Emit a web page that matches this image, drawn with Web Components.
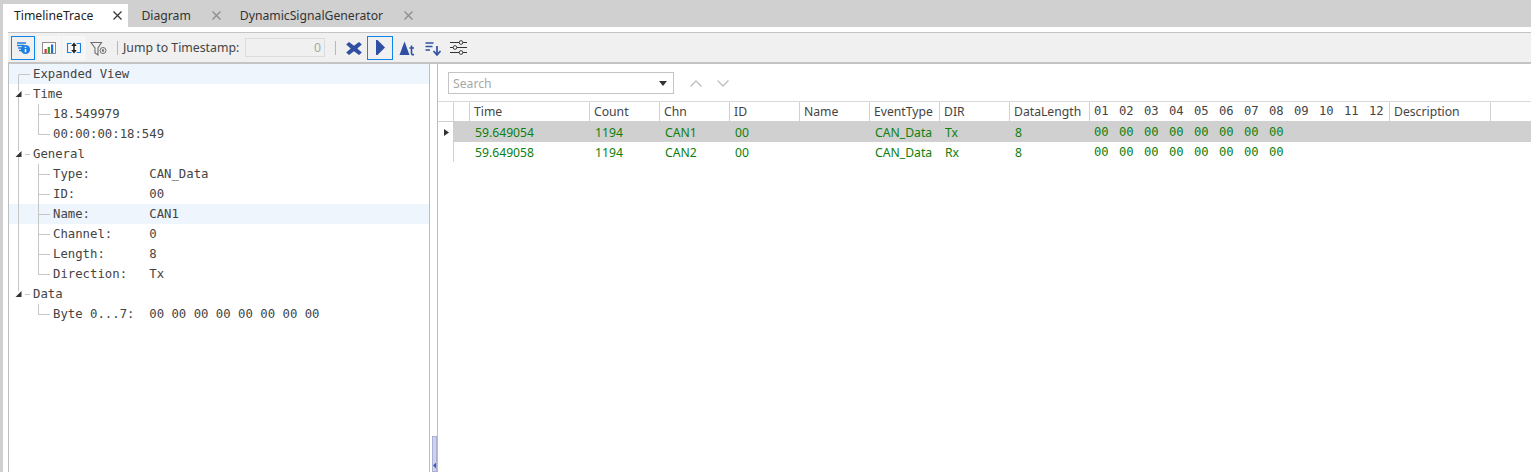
<!DOCTYPE html>
<html>
<head>
<meta charset="utf-8">
<style>
  html, body { margin: 0; height: 100%; overflow: hidden; }
  body { background: #fff; font-family: "Noto Sans", sans-serif; }
</style>
</head>
<body>
<trace-app>
  <tab-strip slot="tabs">
    <tab-item active>TimelineTrace</tab-item>
    <tab-item>Diagram</tab-item>
    <tab-item>DynamicSignalGenerator</tab-item>
  </tab-strip>
  <trace-toolbar slot="toolbar"></trace-toolbar>
  <tree-pane slot="tree"></tree-pane>
  <signal-grid slot="grid"></signal-grid>
</trace-app>

<script>
// Outer frame: gray edge, tab strip, toolbar, then the two panes
class TraceApp extends HTMLElement {
    constructor() {
        super();
        this.attachShadow({ mode: 'open' }).innerHTML = `
            <style>
                :host { display: flex; flex-direction: column; width: 1531px; height: 472px; background: #d0d0d0; box-sizing: border-box; padding-top: 4px; }
                .page { flex: 1; display: flex; flex-direction: column; background: #fff; margin-left: 3px; min-height: 0; padding: 5px 0 0 5px; }
                .body { flex: 1; display: flex; min-height: 0; border-top: 2px solid #c4c4c4; }
                .left { width: 422px; box-sizing: border-box; border-left: 1px solid #bdbdbd; border-right: 1px solid #bdbdbd; flex: none; }
                .split { width: 8px; box-sizing: border-box; flex: none; display: flex; flex-direction: column; justify-content: flex-end; border-right: 1px solid #bdbdbd; }
                .thumb { height: 36px; width: 5px; margin-left: 2px; background: #cfd3ea; border: 1px solid #aab0d6; box-sizing: border-box; display: flex; align-items: flex-end; }
                .thumb svg { display: block; margin-bottom: 2px; }
                .right { flex: 1; min-width: 0; }
            </style>
            <slot name="tabs"></slot>
            <div class="page">
                <slot name="toolbar"></slot>
                <div class="body">
                    <div class="left"><slot name="tree"></slot></div>
                    <div class="split"><div class="thumb"><svg width="4" height="7"><path d="M3.5 0v7L0 3.5z" fill="#3a5fb5"/></svg></div></div>
                    <div class="right"><slot name="grid"></slot></div>
                </div>
            </div>
        `;
    }
}

class TabStrip extends HTMLElement {
    constructor() {
        super();
        this.attachShadow({ mode: 'open' }).innerHTML = `
            <style>
                :host { display: flex; height: 23px; padding-left: 3px; }
            </style>
            <slot></slot>
        `;
    }
}

class TabItem extends HTMLElement {
    constructor() {
        super();
        const on = this.hasAttribute('active');
        this.attachShadow({ mode: 'open' }).innerHTML = `
            <style>
                :host { display: flex; align-items: center; font-size: 12.2px; color: ${on ? '#222' : '#333'}; padding: 0 ${on ? 6 : 6}px 0 ${on ? 11 : 13}px; ${on ? 'background:#fff;' : ''} }
                svg { margin-left: ${on ? 20 : 21}px; display: block; }
                span { white-space: nowrap; }
            </style>
            <span><slot></slot></span>
            <svg width="9" height="9" viewBox="0 0 9 9"><path d="M.5.5l8 8M8.5.5l-8 8" stroke="${on ? '#333' : '#8a8a8a'}" stroke-width="1.2" fill="none"/></svg>
        `;
    }
}

const TOOL_ICONS = {
    expand: `<path d="M2 3h9M2 5.5h7M3 8h5M4 10.5h4" stroke="#1d7fe0" stroke-width="1.3"/><circle cx="10.500" cy="9.500" r="4.600" fill="#1d7fe0"/><path d="M10.500 6.800v1.200M10.500 9v3.200" stroke="#fff" stroke-width="1.500"/>`,
    bars: `<rect x="1.5" y="2.5" width="13" height="11" fill="#fff" stroke="#8c8c8c"/><rect x="3.5" y="9" width="2.2" height="4" fill="#d8352a"/><rect x="6.7" y="7" width="2.2" height="6" fill="#2ba02d"/><rect x="10" y="4.5" width="2.2" height="8.500" fill="#1f6fd0"/>`,
    jump: `<path d="M5.500 3.500H1.500v9h4M10.500 3.500h4v9h-4" stroke="#1d7fe0" stroke-width="1.100" fill="none"/><path d="M8 2.500l2.800 3.500H5.200zM8 13.500L5.200 10h5.600z" fill="#222"/><path d="M8 5.500v5" stroke="#222" stroke-width="1.500"/>`,
    filter: `<path d="M2 2.500h10.500L9 8v7l-3-2V8z" fill="none" stroke="#6e6e6e" stroke-width="1.100"/><circle cx="14" cy="10.500" r="3" fill="none" stroke="#6e6e6e"/><circle cx="14" cy="10.500" r="1.200" fill="#6e6e6e"/>`,
    stop: `<path d="M3 2L8 5.800 13 2 15.800 4.600 11.300 8.500 15.800 12.400 13 15 8 11.200 3 15 .2 12.400 4.700 8.500 .2 4.600z" fill="#2f4fa3"/>`,
    play: `<path d="M4 0H5.500L13 7.500 5.500 15H4z" fill="#2f4fa3"/>`,
    peak: `<path d="M6.500 1.500L11.500 15H1.500z" fill="#2f4fa3"/><path d="M13.500 5.500v7.500c0 1.500 .8 1.800 2.500 1.500M11.500 8H16" stroke="#2f4fa3" stroke-width="1.600" fill="none"/>`,
    sort: `<path d="M1.500 3h8M1.500 6.500h7M1.500 10h4.500" stroke="#2f4fa3" stroke-width="1.700"/><path d="M13 6v8.500" stroke="#2f4fa3" stroke-width="1.700"/><path d="M9.500 11L13 15l3.500-4" stroke="#2f4fa3" stroke-width="1.700" fill="none"/>`,
    sliders: `<path d="M0 2.500h17M0 7.500h17M0 12.500h17" stroke="#333" stroke-width="1"/><circle cx="11" cy="2.500" r="1.800" fill="#fff" stroke="#333"/><circle cx="5" cy="7.500" r="1.800" fill="#fff" stroke="#333"/><circle cx="11" cy="12.500" r="1.800" fill="#fff" stroke="#333"/>`
};

class ToolBtn extends HTMLElement {
    constructor() {
        super();
        const kind = this.getAttribute('icon');
        const w = this.getAttribute('w') || 16;
        const box = this.getAttribute('box');
        const bg = box === 'sel' ? 'border:1px solid #0f86e8;background:#f0f0f0;'
                 : box === 'soft' ? 'border:1px solid #f6f6f6;background:#f6f6f6;'
                 : 'border:1px solid transparent;';
        this.attachShadow({ mode: 'open' }).innerHTML = `
            <style>
                :host { display: flex; align-items: center; justify-content: center; box-sizing: border-box; height: 24px; width: ${this.getAttribute('size') || 24}px; flex: none; ${bg} }
                svg { display: block; overflow: visible; }
            </style>
            <svg width="${w}" height="16" viewBox="0 0 ${w} 16">${TOOL_ICONS[kind]}</svg>
        `;
    }
}

class TraceToolbar extends HTMLElement {
    constructor() {
        super();
        this.attachShadow({ mode: 'open' }).innerHTML = `
            <style>
                :host { display: flex; align-items: center; height: 30px; background: #f0f0f0; border-top: 1px solid #c4c4c4; box-sizing: border-box; padding: 0 0 0 3px; font-size: 12.3px; color: #444; }
                .sep { width: 1px; height: 14px; background: #b8b8b8; flex: none; }
                .label { white-space: nowrap; width: 122px; flex: none; }
                .ts { width: 80px; height: 19px; box-sizing: border-box; border: 1px solid #dcdcdc; background: #f0f0f0; color: #a9a9a9; text-align: right; padding: 0 3px; line-height: 18px; flex: none; }
            </style>
            <tool-btn icon="expand" box="sel"></tool-btn>
            <tool-btn icon="bars" box="soft" style="margin-left:2px"></tool-btn>
            <tool-btn icon="jump" box="soft" style="margin-left:1px"></tool-btn>
            <tool-btn icon="filter" w="18"></tool-btn>
            <div class="sep" style="margin:0 5px 0 7px"></div>
            <div class="label">Jump to Timestamp:</div>
            <div class="ts">0</div>
            <div class="sep" style="margin:0 6px 0 10px"></div>
            <tool-btn icon="stop" w="16"></tool-btn>
            <tool-btn icon="play" box="sel" size="26" style="margin-left:1px" w="16"></tool-btn>
            <tool-btn icon="peak" w="17" style="margin-left:1px"></tool-btn>
            <tool-btn icon="sort" w="17" style="margin-left:2px"></tool-btn>
            <tool-btn icon="sliders" w="17" style="margin-left:2px"></tool-btn>
        `;
    }
}

// One row of the property tree; its guide lines are an svg at the row's start
class TreeRow extends HTMLElement {
    constructor() {
        super();
        this.attachShadow({ mode: 'open' });
    }

    connectedCallback() {
        const level = +this.getAttribute('level') || 0;
        const guides = this.getAttribute('guides') || '';
        const w = level ? 44 : 24;
        this.shadowRoot.innerHTML = `
            <style>
                :host { display: flex; height: 20px; align-items: center; font-family: "DejaVu Sans Mono", monospace; font-size: 12.3px; color: #444; }
                :host([hl]) { background: #eef5fc; }
                svg { display: block; flex: none; }
                .t { white-space: pre; }
            </style>
            <svg width="${w}" height="20">${guides}</svg><span class="t"><slot></slot></span>
        `;
    }
}

class TreePane extends HTMLElement {
    constructor() {
        super();
        const line = '#c6c6c6';
        const path = d => `<path d="${d}" stroke="${line}" fill="none"/>`;
        const arrow = `<path d="M12.500 7v6H6.500z" fill="#333"/>`;
        const mid = path('M9.500 0v20M29.500 0v20M29.500 10.500H41');
        const end = path('M9.500 0v20M29.500 0V10.500H41');
        const rows = [
            [0, 'Expanded View', path('M9.500 20V10.500H21'), 1],
            [0, 'Time', arrow + path('M9.500 0v7M9.500 13v7M16 10.500h5')],
            [1, '18.549979', mid],
            [1, '00:00:00:18:549', end],
            [0, 'General', arrow + path('M9.500 0v7M9.500 13v7M16 10.500h5')],
            [1, 'Type:        CAN_Data', mid],
            [1, 'ID:          00', mid],
            [1, 'Name:        CAN1', mid, 1],
            [1, 'Channel:     0', mid],
            [1, 'Length:      8', mid],
            [1, 'Direction:   Tx', end],
            [0, 'Data', arrow + path('M9.500 0v7M16 10.500h5')],
            [1, 'Byte 0...7:  00 00 00 00 00 00 00 00', path('M29.500 0V10.500H41')]
        ];
        this.attachShadow({ mode: 'open' }).innerHTML = `
            <style>:host { display: block; }</style>
        `;
        rows.forEach(([level, text, guides, hl]) => {
            const r = document.createElement('tree-row');
            r.setAttribute('level', level);
            r.setAttribute('guides', guides);
            if (hl) r.setAttribute('hl', '');
            r.textContent = text;
            this.shadowRoot.appendChild(r);
        });
    }
}

const COLS = [16, 16, 120, 70, 70, 70, 70, 70, 70, 80, ...Array(12).fill(25), 101, 1];
const TEMPLATE_COLS = COLS.map(c => c + 'px').join(' ');

class SignalGrid extends HTMLElement {
    constructor() {
        super();
        const heads = ['', '', 'Time', 'Count', 'Chn', 'ID', 'Name', 'EventType', 'DIR', 'DataLength',
            '01','02','03','04','05','06','07','08','09','10','11','12', 'Description'];
        const data = [
            ['59.649054', '1194', 'CAN1', '00', '', 'CAN_Data', 'Tx', '8'],
            ['59.649058', '1194', 'CAN2', '00', '', 'CAN_Data', 'Rx', '8']
        ];
        const bytes = Array(8).fill('00').map(b => `<span class="c m">${b}</span>`).join('') + '<span class="c"></span>'.repeat(5);
        const headHtml = heads.map((h, i) => {
            const mono = i >= 10 && i < 22;
            const edge = !mono || i === 21;
            return `<span class="h ${mono ? 'm' : ''} ${edge ? 'r' : ''}">${h}</span>`;
        }).join('');
        const rowHtml = data.map((row, i) => `
            <div class="row ${i === 0 ? 'sel' : ''}">
                <span class="rh">${i === 0 ? '<svg width="5" height="7"><path d="M0 0l5 3.500L0 7z" fill="#333"/></svg>' : ''}</span>
                <span class="c"></span>
                ${row.map(v => `<span class="c">${v}</span>`).join('')}
                ${bytes}
            </div>`).join('');
        this.attachShadow({ mode: 'open' }).innerHTML = `
            <style>
                :host { display: block; font-size: 12.2px; }
                .search { display: flex; align-items: flex-start; height: 37px; padding: 8px 0 0 10px; box-sizing: border-box; gap: 16px; }
                .combo { width: 226px; height: 22px; box-sizing: border-box; border: 1px solid #c4c4c4; display: flex; align-items: center; justify-content: space-between; padding: 0 6px 0 4px; color: #a8a8a8; }
                .nav { display: flex; gap: 15px; padding-top: 8px; }
                svg { display: block; }
                .grid { border-top: 1px solid #dadada; }
                .head, .row { display: grid; grid-template-columns: ${TEMPLATE_COLS}; height: 20px; box-sizing: border-box; align-items: center; }
                .head { border-bottom: 1px solid #d0d0d0; color: #444; }
                .h { height: 100%; line-height: 19px; box-sizing: border-box; padding-left: 4px; white-space: nowrap; overflow: hidden; }
                .h.r { border-right: 1px solid #d0d0d0; }
                .h.m { font-family: "DejaVu Sans Mono", monospace; font-size: 12.200px; }
                .row { color: #0d800d; }
                .row.sel { background: linear-gradient(to right, transparent 16px, #d0d0d0 16px); }
                .rh { height: 100%; border-right: 1px solid #d0d0d0; box-sizing: border-box; display: flex; align-items: center; padding-left: 6px; }
                .c { padding-left: 5px; white-space: nowrap; overflow: hidden; }
                .c.m { font-family: "DejaVu Sans Mono", monospace; font-size: 12.200px; padding-left: 4px; }
            </style>
            <div class="search">
                <div class="combo"><span>Search</span><svg width="8" height="5"><path d="M0 0h8L4 5z" fill="#333"/></svg></div>
                <div class="nav">
                    <svg width="12" height="7"><path d="M.5 6.500L6 1l5.500 5.500" stroke="#c4c4c4" stroke-width="1.500" fill="none"/></svg>
                    <svg width="12" height="7"><path d="M.5.5L6 6 11.500.5" stroke="#c4c4c4" stroke-width="1.500" fill="none"/></svg>
                </div>
            </div>
            <div class="grid">
                <div class="head">${headHtml}</div>
                ${rowHtml}
            </div>
        `;
    }
}

customElements.define('trace-app', TraceApp);
customElements.define('tab-strip', TabStrip);
customElements.define('tab-item', TabItem);
customElements.define('tool-btn', ToolBtn);
customElements.define('trace-toolbar', TraceToolbar);
customElements.define('tree-row', TreeRow);
customElements.define('tree-pane', TreePane);
customElements.define('signal-grid', SignalGrid);
</script>
</body>
</html>
